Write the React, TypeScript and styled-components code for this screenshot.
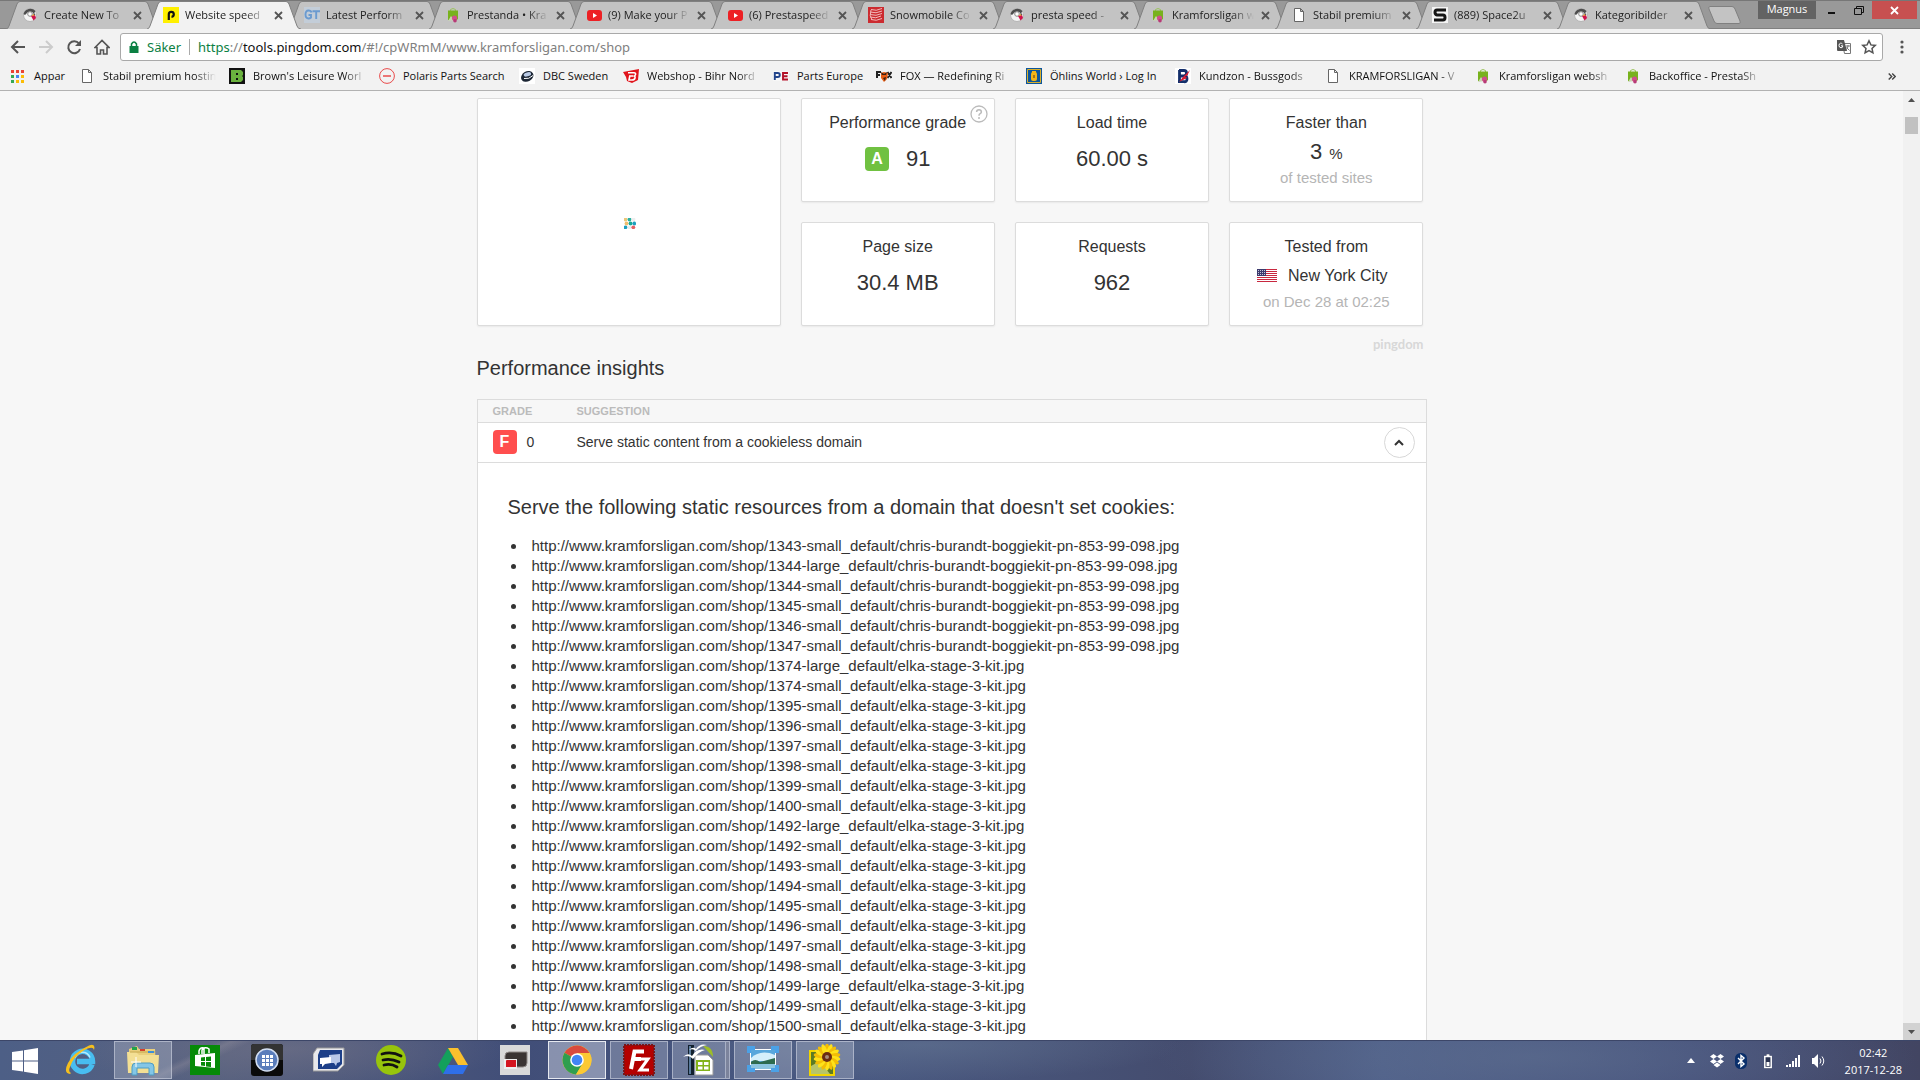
import React from 'react';
import styled, { createGlobalStyle } from 'styled-components';

const ui = '"Open Sans", "Noto Sans", sans-serif';
const body = '"Liberation Sans", Arial, sans-serif';

const Global = createGlobalStyle`
  *, *::before, *::after { box-sizing: border-box; }
  body { margin: 0; overflow: hidden; }
  button { font: inherit; color: inherit; padding: 0; margin: 0; border: 0; background: none; }
  h1, h2, h3, p, ul { margin: 0; padding: 0; font-weight: 400; }
  svg { display: block; flex: none; }
`;

const Screen = styled.div`
  height: 100vh;
  display: flex;
  flex-direction: column;
  font-family: ${ui};
  font-size: 11px;
  color: #111;
`;

/* ---------- browser chrome ---------- */

const TabStrip = styled.div`
  display: flex;
  height: 29px;
  padding: 0 3px 0 6px;
  background: #999;
  border-top: 1px solid #777;
  border-bottom: 1px solid #808080;
`;

const TabList = styled.div`
  display: flex;
`;

const Tab = styled.div<{ $active?: boolean }>`
  position: relative;
  z-index: ${p => (p.$active ? 1 : 0)};
  display: flex;
  align-items: center;
  width: 141px;
  height: 28px;
  padding-left: 16px;
`;

const TabShape = styled.svg`
  position: absolute;
  left: 0;
  top: 0;
`;

const TabLink = styled.a`
  position: relative;
  display: flex;
  align-items: center;
  gap: 6px;
  color: #222;
  text-decoration: none;
`;

const fade = `
  overflow: hidden;
  white-space: nowrap;
  mask-image: linear-gradient(to right, #000 calc(100% - 22px), transparent);
`;

const TabTitle = styled.span`
  width: 82px;
  line-height: 18px;
  ${fade}
`;

const TabClose = styled.button`
  position: relative;
  margin-left: 7px;
`;

const NewTab = styled.button`
  align-self: center;
  margin-left: 9px;
`;

const WindowControls = styled.div`
  display: flex;
  align-items: flex-start;
  margin-left: auto;
`;

const Profile = styled.button`
  width: 58px;
  height: 18px;
  padding-bottom: 3px;
  background: #636363;
  color: #fff;
  line-height: 15px;
`;

const WinButton = styled.button<{ $close?: boolean }>`
  display: flex;
  align-items: center;
  justify-content: center;
  width: ${p => (p.$close ? 45 : 26)}px;
  height: 18px;
  margin-left: ${p => (p.$close ? 0 : 2)}px;
  background: ${p => (p.$close ? '#c75050' : 'transparent')};
`;

const Toolbar = styled.div`
  display: flex;
  align-items: center;
  height: 33px;
  padding: 4px 8px 1px 4px;
  background: #f2f2f2;
`;

const NavButton = styled.button`
  display: flex;
  align-items: center;
  justify-content: center;
  width: 28px;
  height: 28px;
`;

const Omnibox = styled.div`
  display: flex;
  flex: 1;
  align-items: center;
  height: 28px;
  margin-left: 4px;
  padding: 0 1px 0 8px;
  border: 1px solid #a9a9a9;
  border-radius: 3px;
  background: #fff;
  font-family: "Noto Sans", sans-serif;
  font-size: 13px;
`;

const Secure = styled.span`
  margin-left: 8px;
  padding-right: 8px;
  border-right: 1px solid #aaa;
  line-height: 16px;
  color: #0b8043;
`;

const Url = styled.div`
  flex: 1;
  padding-left: 8px;
  color: #808080;
  outline: 0;
`;

const Scheme = styled.span` color: #0b8043; `;
const Host = styled.span` color: #111; `;

const OmniAction = styled.button`
  display: flex;
  align-items: center;
  justify-content: center;
  width: 25px;
  height: 24px;
`;

const MenuButton = styled(NavButton)`
  margin: 0 -4px 0 5px;
`;

const Bookmarks = styled.nav`
  display: flex;
  align-items: center;
  gap: 13px;
  height: 29px;
  padding: 0 24px 0 10px;
  background: #f2f2f2;
  border-bottom: 1px solid #b2b2b2;
`;

const Bookmark = styled.a`
  display: flex;
  align-items: center;
  gap: 8px;
  color: #111;
  text-decoration: none;
`;

const BookmarkTitle = styled.span<{ $width?: number }>`
  width: ${p => p.$width || 113}px;
  line-height: 18px;
  white-space: nowrap;
  ${p => (p.$width ? '' : fade)}
`;

const Overflow = styled.button`
  margin-left: auto;
`;

/* ---------- page ---------- */

const Viewport = styled.div`
  display: flex;
  flex: 1;
  min-height: 0;
`;

const Page = styled.main`
  flex: 1;
  overflow: hidden;
  background: #f7f7f7;
  font-family: ${body};
  color: #333;
`;

const Container = styled.div`
  max-width: 950px;
  margin: 0 auto;
  padding-top: 7px;
`;

const Summary = styled.section`
  display: grid;
  grid-template-columns: 304px repeat(3, 1fr);
  grid-auto-rows: 104px;
  gap: 20px;
  padding-right: 3px;
`;

const Card = styled.article`
  position: relative;
  display: flex;
  flex-direction: column;
  align-items: center;
  padding-top: 12px;
  border: 1px solid #dcdcdc;
  border-radius: 2px;
  background: #fff;
  box-shadow: 0 1px 2px rgba(0, 0, 0, 0.06);
`;

const Preview = styled(Card)`
  grid-row: span 2;
  justify-content: center;
  padding: 23px 0 0 3px;
`;

const CardLabel = styled.h3`
  font-size: 16px;
  line-height: 24px;
`;

const Value = styled.p<{ $gap?: number; $compact?: boolean; $small?: boolean }>`
  display: flex;
  align-items: center;
  gap: ${p => p.$gap || 0}px;
  margin-top: ${p => (p.$small ? 2 : p.$compact ? 3 : 10)}px;
  padding-right: ${p => (p.$small ? 8 : 0)}px;
  font-size: ${p => (p.$small ? 16 : 22)}px;
  line-height: ${p => (p.$small ? 29 : 28)}px;
`;

const Percent = styled.small`
  font-size: 15px;
  line-height: 24px;
  align-self: flex-end;
`;

const Note = styled.p`
  font-size: 15px;
  line-height: 24px;
  color: #b5b5b5;
`;

const Grade = styled.span<{ $color: string }>`
  display: inline-block;
  width: 24px;
  height: 24px;
  border-radius: 4px;
  background: ${p => p.$color};
  color: #fff;
  font-size: 16px;
  font-weight: 700;
  line-height: 23px;
  text-align: center;
`;

const Help = styled.button`
  position: absolute;
  top: 6px;
  right: 6px;
`;

const Brand = styled.p`
  margin-top: 8px;
  padding-right: 3px;
  font-family: Lato, sans-serif;
  font-size: 13px;
  font-weight: 700;
  line-height: 20px;
  text-align: right;
  color: #d8d8d8;
`;

const Title = styled.h2`
  margin-bottom: 16px;
  font-size: 20px;
  line-height: 29px;
`;

const Insights = styled.table`
  width: 100%;
  border: 1px solid #dcdcdc;
  border-spacing: 0;
  table-layout: fixed;
  background: #fff;
`;

const HeadCell = styled.th<{ $width?: number }>`
  width: ${p => (p.$width ? p.$width + 'px' : 'auto')};
  height: 23px;
  padding: 0 0 0 15px;
  border-bottom: 1px solid #dcdcdc;
  background: #f7f7f7;
  font-size: 11px;
  text-align: left;
  color: #bbb;
`;

const Cell = styled.td`
  height: 40px;
  padding: 0 11px 1px 15px;
  border-bottom: 1px solid #dcdcdc;
  font-size: 14px;
`;

const Score = styled.div`
  display: flex;
  align-items: center;
  gap: 10px;
`;

const Suggestion = styled.div`
  display: flex;
  align-items: center;
  justify-content: space-between;
`;

const Toggle = styled.button`
  display: flex;
  align-items: center;
  justify-content: center;
  width: 31px;
  height: 31px;
  border: 1px solid #d8d8d8;
  border-radius: 50%;
  background: #fff;
`;

const Detail = styled.td`
  padding: 30px 30px 60px;
`;

const DetailTitle = styled.h3`
  margin-bottom: 15px;
  font-size: 20px;
  line-height: 28px;
`;

const Resources = styled.ul`
  list-style: none;
  font-size: 15px;
  line-height: 20px;
`;

const Resource = styled.li`
  display: flex;
  align-items: center;
  gap: 16px;
  padding-left: 3px;
  &::before {
    content: '';
    width: 5px;
    height: 5px;
    border-radius: 50%;
    background: #333;
  }
`;

const Scrollbar = styled.div`
  display: flex;
  flex-direction: column;
  width: 17px;
  background: #f1f1f1;
`;

const ScrollArrow = styled.button<{ $shaded?: boolean }>`
  display: flex;
  align-items: center;
  justify-content: center;
  height: 17px;
  background: ${p => (p.$shaded ? '#d2d2d2' : 'transparent')};
`;

const Track = styled.div`
  flex: 1;
  padding: 9px 2px 0;
`;

const Thumb = styled.div`
  height: 17px;
  background: #c1c1c1;
`;

/* ---------- taskbar ---------- */

const Taskbar = styled.footer`
  display: flex;
  height: 40px;
  border-top: 1px solid #3c4668;
  color: #fff;
  background:
    linear-gradient(155deg, transparent 46%, rgba(150, 146, 160, 0.35) 50%, transparent 56%) 60px 0 / 260px 40px no-repeat,
    radial-gradient(ellipse 220px 40px at 15% 20%, rgba(125, 122, 140, 0.45), transparent),
    radial-gradient(ellipse 260px 36px at 48% 10%, rgba(104, 122, 150, 0.5), transparent),
    radial-gradient(ellipse 380px 60px at 80% 40%, rgba(95, 112, 144, 0.6), transparent),
    linear-gradient(to right, #4d5f86, #56607e 12%, #414e78 27%, #4a5a82 45%, #444c6e 62%, #4f608a 72%, #45507a 88%, #424562);
`;

const StartButton = styled.button`
  display: flex;
  align-items: center;
  justify-content: center;
  width: 50px;
`;

const Task = styled.button<{ $state?: 'open' | 'active' | 'stack' }>`
  display: flex;
  align-items: center;
  justify-content: center;
  width: 58px;
  height: 38px;
  margin: 0 2px;
  border: 1px solid ${p => (p.$state === 'active' ? '#e6e9f0' : p.$state ? 'rgba(205,210,225,.6)' : 'transparent')};
  background: ${p => (p.$state === 'active' ? 'rgba(205,212,228,.5)' : p.$state ? 'rgba(180,186,205,.38)' : 'none')};
  ${p => (p.$state === 'stack' ? 'padding-right: 5px; box-shadow: inset -4px 0 0 -1px rgba(80,88,116,.5), inset -5px 0 0 -1px rgba(205,210,225,.6);' : '')}
`;

const Tray = styled.div`
  display: flex;
  align-items: center;
  gap: 10px;
  margin-left: auto;
  padding-right: 18px;
`;

const Clock = styled.time`
  margin-left: 8px;
  line-height: 17px;
  text-align: center;
`;

/* ---------- icons ---------- */

type IconName =
  | 'puffin' | 'pingdom' | 'gt' | 'presta' | 'youtube' | 'snow' | 'page' | 'space'
  | 'apps' | 'brown' | 'polaris' | 'dbc' | 'bihr' | 'pe' | 'fox' | 'ohlins' | 'buss';

const glyph = { fontFamily: 'Liberation Sans', fontWeight: 700, textAnchor: 'middle' as const };

const drawings: Record<IconName, React.ReactNode> = {
  puffin: <>
    <circle cx="8" cy="8" r="6.500" fill="#f4f4f4" stroke="#b5b5b5" />
    <path d="M1.500 7A7 7 0 0 1 13.500 4L12 6.500Q9 3.500 6 5L3 8z" fill="#4d4d4d" />
    <circle cx="8" cy="7" r="2.300" fill="#fff" stroke="#888" />
    <path d="M9 9l4-1 1 3-2.500 2.500z" fill="#d0124d" /><path d="M11.500 5.500l2 2-2 1z" fill="#4d4d4d" />
    <path d="M9.500 9l2-2 1 1.500z" fill="#ef9a1e" />
  </>,
  pingdom: <>
    <path d="M0 0h16v16H0z" fill="#fff000" />
    <path d="M5.800 13V7.300a2.500 2.500 0 1 1 2.700 2.500" fill="none" stroke="#111" strokeWidth="2.200" />
  </>,
  gt: <>
    <path d="M0 0h16v16H0z" fill="#c3cdd8" />
    <path d="M7.500 5.500Q7 3.500 4.500 3.500 1.500 3.500 1.500 7.500T4.500 11.500Q6 11.500 7 10.500V8H4.500M8.500 4.300H16M12.200 4v8" fill="none" stroke="#6b9bd0" strokeWidth="1.900" />
  </>,
  presta: <>
    <path d="M5.500 4V2.500q2.500-2 5 0V4" fill="none" stroke="#9bc35c" />
    <path d="M3 3.500h10v8L12 13H3z" fill="#78b21d" />
    <path d="M3 14l3-5 3 4z" fill="#c9d6b4" />
    <circle cx="9.500" cy="11" r="2.600" fill="#d14f8c" /><circle cx="10" cy="13.800" r="1.800" fill="#b83a76" />
  </>,
  youtube: <>
    <rect x="1" y="3" width="15" height="11" rx="3" fill="#ed2024" />
    <path d="M7 6v5l4-2.500z" fill="#fff" />
  </>,
  snow: <>
    <path d="M0 0h16v16H0z" fill="#cc2b30" />
    <path d="M3 2.500q5 2 11-1M2 5q6 2 12-1M2 7.500q6 2 12-1M2 10q6 2 11-1M3 12.500q5 2 11-1M3 3Q1 9 4 13" stroke="#f2b9b9" fill="none" />
  </>,
  page: <path d="M3.500 1.500h6l3 3v10h-9zM9.500 1.500v3h3" fill="#fff" stroke="#666" />,
  space: <>
    <path d="M0 0h16v16H0z" fill="#f4f4f4" />
    <path d="M14 3H5Q3 3 3 5.300T5 8h6q2 0 2 2.500T11 13H2" fill="none" stroke="#151515" strokeWidth="3" />
  </>,
  apps: <>
    {[['#ea4335', '#ea4335', '#ea4335'], ['#34a853', '#4285f4', '#fbbc05'], ['#34a853', '#fbbc05', '#fbbc05']].map((row, y) =>
      row.map((c, x) => <rect key={`${x}${y}`} x={1 + x * 5} y={2 + y * 5} width="3" height="3" fill={c} />))}
  </>,
  brown: <>
    <path d="M0 0h16v16H0z" fill="#111" /><path d="M2 2h10l2 2v3l-1 1 1 1v3l-2 2H2z" fill="#6ab23e" />
    <path d="M7 5h2v2H7zM7 10h2v2H7z" fill="#111" />
  </>,
  polaris: <><circle cx="8" cy="8" r="7.400" fill="none" stroke="#e94b4b" /><path d="M4 8h8" stroke="#e94b4b" strokeWidth="1.500" /></>,
  dbc: <>
    <path d="M0 0h16v16H0z" fill="#fff" /><ellipse cx="8" cy="8.500" rx="6.500" ry="5" transform="rotate(-30 8 8)" fill="#1c2634" />
    <ellipse cx="8.500" cy="6.500" rx="3.800" ry="2" transform="rotate(-15 8 7)" fill="#b9c9e4" /><path d="M5 10.500q5 1 9-3" stroke="#fff" fill="none" />
  </>,
  bihr: <>
    <path d="M0 4l16-3-1 11-6 3-5-2-1-4z" fill="#e1141c" />
    <path d="M5 4.800h6q2 0 1.500 1.800T10.500 8q2 0 1.500 2t-3 2H6l.8-4M6 8h4" fill="none" stroke="#fff" strokeWidth="1.600" />
  </>,
  pe: <>
    <path d="M0 3h16v10H0z" fill="#f7f7f7" />
    <path d="M1.800 12V5h3q2 0 2 2t-2 2h-3" fill="none" stroke="#23458c" strokeWidth="1.900" />
    <path d="M15 5H10v6.500h5M10 8.200h4.500" fill="none" stroke="#b3122a" strokeWidth="1.900" />
  </>,
  fox: <>
    <path d="M1 10V4h4M1 7h3M11.500 4l4 6M15.500 4l-4 6" fill="none" stroke="#222" strokeWidth="2" />
    <path d="M5 5l3-1 4 1-1 6-3 3-3-4z" fill="#e85c12" /><path d="M5 4l3 2 3-2-1 3H6zM7 10l3-1-1 4z" fill="#3b2114" />
  </>,
  ohlins: <>
    <path d="M0 0h16v16H0z" fill="#0d559b" /><path d="M1.500 1.500h13v13h-13z" fill="none" stroke="#d9b02c" />
    <rect x="5" y="4" width="6" height="9" rx="2" fill="#f4b517" /><path d="M6 3h4v2H6z" fill="#f4b517" /><path d="M7 7h2v3H7z" fill="#ab7413" />
  </>,
  buss: <>
    <path d="M0 0h16v16H0z" fill="#fff" />
    <path d="M4 2.500h5q2.500 0 2.500 2.600T9 8H5M4.500 2v12M5 8h4q3 0 3 3t-3 2.700H3" fill="none" stroke="#142f6b" strokeWidth="2.800" />
    <path d="M15 2l-3 6-2 0 2 2-8 4 4-5z" fill="#d91c32" />
  </>,
};

const Favicon = ({ name }: { name: IconName }) => (
  <svg width="16" height="16" viewBox="0 0 16 16" aria-hidden="true">{drawings[name]}</svg>
);

const Cross = ({ color }: { color: string }) => (
  <svg width="9" height="9" viewBox="0 0 9 9"><path d="M1 1l7 7M8 1L1 8" stroke={color} strokeWidth="1.800" /></svg>
);

const Flag = () => (
  <svg width="20" height="13" viewBox="0 0 20 13" role="img" aria-label="USA">
    <path d="M0 0h20v13H0z" fill="#fff" />
    <path d="M0 .5h20M0 2.500h20M0 4.500h20M0 6.500h20M0 8.500h20M0 10.500h20M0 12.500h20" stroke="#c8283f" />
    <path d="M0 0h9v7H0z" fill="#3c3b6e" />
    <path d="M1 1.500h8M1 3.500h8M1 5.500h8" stroke="#c5c5d8" strokeDasharray="1 1" />
  </svg>
);

const Loader = () => (
  <svg width="12" height="11" viewBox="0 0 12 11">
    {[[1.5, 1.5, '#eac77a'], [5.5, 1.5, '#2ab0a0'], [9.5, 1.5, '#eee'], [2.5, 5.5, '#f0bd6e'], [6.5, 5.5, '#17a995'],
      [10.3, 5.5, '#1b9fc0'], [1.5, 9.3, '#1c9fc0'], [5.5, 9.3, '#e9eef0'], [9.3, 9.3, '#e55f62']].map(([x, y, c], i) =>
      <circle key={i} cx={x} cy={y} r="1.900" fill={c as string} />)}
  </svg>
);

const TaskIcon = ({ children }: { children: React.ReactNode }) => (
  <svg width="32" height="32" viewBox="0 0 32 32" aria-hidden="true">{children}</svg>
);

const tasks: { label: string; state?: 'open' | 'active' | 'stack'; icon: React.ReactNode }[] = [
  { label: 'Internet Explorer', icon: <>
    <path d="M27 20.500A10 10 0 1 1 27.500 17.500H12" fill="none" stroke="#48bdf0" strokeWidth="5.500" />
    <path d="M10 13.500a8 8 0 0 1 15 0" fill="none" stroke="#b4eafc" strokeWidth="1.500" />
    <path d="M5 30Q-2 29 3 19T24 1.500q7-2.500 5 4.500Q28 1 18 7T5 23q-2 5 1 6z" fill="#f5bf1e" />
  </> },
  { label: 'File Explorer', state: 'open', icon: <>
    <path d="M2 5l8-3 2 3h16l1 21H2z" fill="#e9cf7c" /><path d="M0 8h9l3 3h20l-1 18H1z" fill="#f3df94" />
    <path d="M3 8h25" stroke="#c6a84e" /><path d="M5 3h5v3H5z" fill="#23a34a" /><path d="M13 5h5v2h-5z" fill="#d5402b" /><path d="M21 7h6v2h-6z" fill="#3d8fd8" />
    <path d="M5 31V23q0-4 4-4h14q4 0 4 4v8h-5v-7H10v7z" fill="#84c6e6" stroke="#4d9cc4" />
    <path d="M9 13v10M4 18h10" stroke="#fff" />
  </> },
  { label: 'Store', icon: <>
    <path d="M1 1h30v30H1z" fill="#068a08" /><path d="M6 11l20-2v15l-20-2z" fill="#fff" />
    <path d="M10 10V7q1-4 5-3v6M13 10V6q3-4 7-1v4" fill="none" stroke="#fff" strokeWidth="1.500" />
    <path d="M12 13.500l4-.5v4h-4zM17 13l5-.5V17h-5zM12 18h4v4l-4-.5zM17 18h5v5l-5-.6z" fill="#068a08" />
  </> },
  { label: 'App launcher', icon: <>
    <rect width="32" height="32" rx="3" fill="#0a0a0a" /><path d="M0 16V3q0-3 3-3h26q3 0 3 3v13z" fill="#333" />
    <circle cx="16" cy="16" r="11" fill="#5a7dbb" stroke="#d4dff2" strokeWidth="1.500" />
    <path d="M11 11h3v3h-3zM15 11h3v3h-3zM19 11h3v3h-3zM11 15h3v3h-3zM15 15h3v3h-3zM19 15h3v3h-3zM11 19h3v3h-3zM15 19h3v3h-3zM19 19h3v3h-3z" fill="#fff" />
  </> },
  { label: 'Messages', icon: <>
    <path d="M4 4h27v17l-6 6H0V10z" fill="#e8e8ec" stroke="#999" /><path d="M7 6h22v14l-5 5H5V11z" fill="#1d3f88" />
    <path d="M16 11l11-1v8l-3 1-1 3-2-3h-5z" fill="#b9c8e8" /><path d="M7 14l11-1v6l-6 1-3 3v-3H7z" fill="#fff" />
  </> },
  { label: 'Spotify', icon: <>
    <circle cx="16" cy="16" r="15" fill="#97c40c" />
    <path d="M7 10q10-3 19 2M8 16q8-2 16 2M9 21q7-2 13 2" stroke="#111" strokeWidth="2.800" strokeLinecap="round" fill="none" />
  </> },
  { label: 'Google Drive', icon: <>
    <path d="M11 4l5 9L6 30 1 21z" fill="#13a05c" /><path d="M11 4h10l10 17H21z" fill="#fbc02d" /><path d="M11 21h20l-5 9H6z" fill="#2f6fe8" />
  </> },
  { label: 'Screen recorder', icon: <>
    <path d="M1 1h30v30H1z" fill="#d9d9d9" /><path d="M10 8h18v11q0 4-4 4H6V12q0-4 4-4z" fill="#3a3433" stroke="#8e8886" />
    <path d="M5 15h13v10H5z" fill="#eee" /><path d="M7 17q0-1 1-1h9v7H7z" fill="#d4151f" />
  </> },
  { label: 'Chrome', state: 'active', icon: <>
    <circle cx="16" cy="16" r="14.500" fill="#fcc934" /><path d="M16 16L3.500 8.700A14.500 14.500 0 0 1 28.600 9H16z" fill="#d94a3d" />
    <path d="M3.500 8.700A14.500 14.500 0 0 0 15 30.500L22 19l-6-3z" fill="#2f9e4f" />
    <path d="M16 9h12.600A14.500 14.500 0 0 1 15 30.500L22 19z" fill="#fcc934" />
    <circle cx="16" cy="16" r="6.800" fill="#fff" /><circle cx="16" cy="16" r="5.300" fill="#4285f4" />
  </> },
  { label: 'FileZilla', state: 'open', icon: <>
    <path d="M1 1h30v30H1z" fill="#b40000" stroke="#7a1518" strokeWidth="2" strokeDasharray="2 1" />
    <path d="M8 25L11.500 7.500H21M10 15h8" fill="none" stroke="#fff" strokeWidth="4" /><path d="M16 15h9l-8 11h9" fill="none" stroke="#fff" strokeWidth="3" />
  </> },
  { label: 'OpenOffice', state: 'stack', icon: <>
    <path d="M5 1h6v30H5z" fill="#12202e" /><path d="M6 2h2v28H6z" fill="#597a9a" /><path d="M20 2q10 0 10 11z" fill="#9dbe27" />
    <path d="M12 11h13l5 5v15H12z" fill="#fff" stroke="#999" /><path d="M13 16h14v11H13z" fill="#83b31a" />
    <path d="M15 18h4.500v3H15zM21 18h4.500v3H21zM15 22.500h4.500v3H15zM21 22.500h4.500v3H21z" fill="#fff" />
    <path d="M0 13q5-5 9-1 5-8 13-6-7 2-12 9-4-5-10-2zM6 6q4-4 7-1 4-6 11-4-7 1-11 6-3-3-7-1z" fill="#fff" />
  </> },
  { label: 'Photo viewer', state: 'open', icon: <>
    <path d="M3 5h26v21H3z" fill="#fff" /><path d="M4 6h24v19H4z" fill="#58a7dc" /><path d="M4 14q10-9 24-3v6H4z" fill="#d4effb" />
    <path d="M4 18q4-4 9 0l15-4v7H4z" fill="#2d6b4e" /><path d="M4 20h24v5H4z" fill="#8cc5df" />
    <path d="M2 9V4h6M24 4h6v5M30 21v5h-6M8 26H2v-5" fill="none" stroke="#4ba1e6" strokeWidth="4" />
  </> },
  { label: 'Sunflower', state: 'open', icon: <>
    <path d="M0 6h26v26H0z" fill="#f1d500" /><path d="M2 8h22v22H2z" fill="#5c7b24" /><path d="M2 22l9-5 10 13H2z" fill="#b7c46a" />
    {Array.from({ length: 18 }, (_, i) => <ellipse key={i} cx="18" cy="5.500" rx="2.400" ry="6" fill={i % 2 ? '#ffe21a' : '#f3bd06'} transform={`rotate(${i * 20} 18 13)`} />)}
    <circle cx="18" cy="13" r="5" fill="#6b2c12" /><circle cx="18" cy="13" r="2" fill="#a88c7a" />
  </> },
];

/* ---------- data ---------- */

const tabs: { icon: IconName; title: string; active?: boolean }[] = [
  { icon: 'puffin', title: 'Create New To' },
  { icon: 'pingdom', title: 'Website speed', active: true },
  { icon: 'gt', title: 'Latest Perform' },
  { icon: 'presta', title: 'Prestanda • Kra' },
  { icon: 'youtube', title: '(9) Make your P' },
  { icon: 'youtube', title: '(6) Prestaspeed' },
  { icon: 'snow', title: 'Snowmobile Co' },
  { icon: 'puffin', title: 'presta speed -' },
  { icon: 'presta', title: 'Kramforsligan w' },
  { icon: 'page', title: 'Stabil premium' },
  { icon: 'space', title: '(889) Space2u' },
  { icon: 'puffin', title: 'Kategoribilder' },
];

const bookmarks: { icon: IconName; title: string; width?: number }[] = [
  { icon: 'apps', title: 'Appar', width: 32 },
  { icon: 'page', title: 'Stabil premium hostin' },
  { icon: 'brown', title: "Brown's Leisure Worl" },
  { icon: 'polaris', title: 'Polaris Parts Search', width: 103 },
  { icon: 'dbc', title: 'DBC Sweden', width: 67 },
  { icon: 'bihr', title: 'Webshop - Bihr Nord' },
  { icon: 'pe', title: 'Parts Europe', width: 66 },
  { icon: 'fox', title: 'FOX — Redefining Ri' },
  { icon: 'ohlins', title: 'Öhlins World › Log In', width: 112 },
  { icon: 'buss', title: 'Kundzon - Bussgods' },
  { icon: 'page', title: 'KRAMFORSLIGAN - V' },
  { icon: 'presta', title: 'Kramforsligan websh' },
  { icon: 'presta', title: 'Backoffice - PrestaSh' },
];

const boggie = 'chris-burandt-boggiekit-pn-853-99-098';
const elka = 'elka-stage-3-kit';
const resources: [string, string][] = [
  ...['1343-small', '1344-large', '1344-small', '1345-small', '1346-small', '1347-small'].map((id): [string, string] => [id, boggie]),
  ...['1374-large', '1374-small', '1395-small', '1396-small', '1397-small', '1398-small', '1399-small', '1400-small',
    '1492-large', '1492-small', '1493-small', '1494-small', '1495-small', '1496-small', '1497-small', '1498-small',
    '1499-large', '1499-small', '1500-small'].map((id): [string, string] => [id, elka]),
];

const stroke = { fill: 'none', stroke: '#555', strokeWidth: 2 };

export default function App() {
  return (
    <Screen>
      <Global />
      <TabStrip>
        <TabList>
          {tabs.map(t => (
            <Tab key={t.title} $active={t.active}>
              <TabShape width="155" height="28" viewBox="0 0 155 28">
                <path d="M0 28Q2 28 3 25L11 3Q12 .5 14 .5H139Q141 .5 142 3L150 25Q151 28 154 28"
                  fill={t.active ? '#f2f2f2' : '#c3c3c3'} stroke="#808080" />
              </TabShape>
              <TabLink href="#"><Favicon name={t.icon} /><TabTitle>{t.title}</TabTitle></TabLink>
              <TabClose aria-label="Close tab"><Cross color="#555" /></TabClose>
            </Tab>
          ))}
        </TabList>
        <NewTab aria-label="New tab">
          <svg width="36" height="18" viewBox="0 0 36 18"><path d="M3 .5H25Q27 .5 28 3L33 15Q34 17.500 32 17.500H10Q8 17.500 7 15L2 3Q1 .5 3 .5z" fill="#c3c3c3" stroke="#808080" /></svg>
        </NewTab>
        <WindowControls>
          <Profile>Magnus</Profile>
          <WinButton aria-label="Minimize"><svg width="9" height="9"><path d="M1 7h7" stroke="#111" strokeWidth="2" /></svg></WinButton>
          <WinButton aria-label="Restore"><svg width="10" height="9" viewBox="0 0 10 9"><path d="M.5 2.500h7v6h-7zM2.500 2V.5h7v6H8" fill="none" stroke="#111" /></svg></WinButton>
          <WinButton $close aria-label="Close"><Cross color="#fff" /></WinButton>
        </WindowControls>
      </TabStrip>

      <Toolbar>
        <NavButton aria-label="Back"><svg width="16" height="16" viewBox="0 0 16 16"><path d="M15 8H2M8 2L2 8l6 6" {...stroke} /></svg></NavButton>
        <NavButton aria-label="Forward"><svg width="16" height="16" viewBox="0 0 16 16"><path d="M1 8h13M8 2l6 6-6 6" {...stroke} stroke="#ccc" /></svg></NavButton>
        <NavButton aria-label="Reload"><svg width="16" height="16" viewBox="0 0 16 16"><path d="M13 4.500A6 6 0 1 0 14 10" {...stroke} /><path d="M15 1v6H9z" fill="#555" /></svg></NavButton>
        <NavButton aria-label="Home"><svg width="16" height="16" viewBox="0 0 16 16"><path d="M1 8.500L8 1.500l7 7h-2V15H9.500v-4h-3v4H3V8.500z" fill="none" stroke="#555" strokeWidth="1.600" /></svg></NavButton>
        <Omnibox>
          <svg width="10" height="12" viewBox="0 0 10 12"><path d="M.5 5h9v7h-9z" fill="#0b8043" /><path d="M2.500 5V3q2.500-4 5 0v2" fill="none" stroke="#0b8043" strokeWidth="1.500" /></svg>
          <Secure>Säker</Secure>
          <Url role="textbox" aria-label="Address" tabIndex={0}><Scheme>https</Scheme>://<Host>tools.pingdom.com</Host>/#!/cpWRmM/www.kramforsligan.com/shop</Url>
          <OmniAction aria-label="Translate">
            <svg width="16" height="16" viewBox="0 0 16 16">
              <path d="M6.500 4.500h8v10h-6z" fill="#fff" stroke="#777" /><path d="M1 1h7l3 11H2q-1 0-1-1z" fill="#555" />
              <path d="M6.500 5Q5.500 4 4.500 4.200 3 4.500 3 6.500T5 8.800Q6.800 8.800 6.800 6.800H5" fill="none" stroke="#fff" /><path d="M9.500 7h4.500M12 6v1q0 2-2 4M10.500 8.500l3 3" stroke="#777" fill="none" />
            </svg>
          </OmniAction>
          <OmniAction aria-label="Bookmark this page">
            <svg width="16" height="16" viewBox="0 0 16 16"><path d="M8 1.800l1.900 4.100 4.400.5-3.300 3 .9 4.400L8 11.600l-3.900 2.200.9-4.400-3.300-3 4.400-.5z" fill="none" stroke="#555" strokeWidth="1.500" /></svg>
          </OmniAction>
        </Omnibox>
        <MenuButton aria-label="Menu"><svg width="4" height="14" viewBox="0 0 4 14"><g fill="#555"><circle cx="2" cy="2" r="1.600" /><circle cx="2" cy="7" r="1.600" /><circle cx="2" cy="12" r="1.600" /></g></svg></MenuButton>
      </Toolbar>

      <Bookmarks>
        {bookmarks.map(b => (
          <Bookmark href="#" key={b.title}><Favicon name={b.icon} /><BookmarkTitle $width={b.width}>{b.title}</BookmarkTitle></Bookmark>
        ))}
        <Overflow aria-label="More bookmarks"><svg width="8" height="7" viewBox="0 0 8 7"><path d="M.7.500l3 3-3 3M4.200.500l3 3-3 3" fill="none" stroke="#444" strokeWidth="1.400" /></svg></Overflow>
      </Bookmarks>

      <Viewport>
        <Page>
          <Container>
            <Summary>
              <Preview><Loader /></Preview>
              <Card>
                <CardLabel>Performance grade</CardLabel>
                <Value $gap={17}><Grade $color="#70c141">A</Grade>91</Value>
                <Help aria-label="Help"><svg width="18" height="18" viewBox="0 0 18 18"><circle cx="9" cy="9" r="8" fill="none" stroke="#bbb" strokeWidth="1.300" /><path d="M6.600 7q0-2.300 2.400-2.300T11.400 7q0 1-1.200 1.700Q9 9.400 9 10.700" fill="none" stroke="#bbb" strokeWidth="1.500" /><circle cx="9" cy="12.900" r="1" fill="#bbb" /></svg></Help>
              </Card>
              <Card><CardLabel>Load time</CardLabel><Value>60.00 s</Value></Card>
              <Card>
                <CardLabel>Faster than</CardLabel>
                <Value $compact $gap={7}>3<Percent>%</Percent></Value>
                <Note>of tested sites</Note>
              </Card>
              <Card><CardLabel>Page size</CardLabel><Value>30.4 MB</Value></Card>
              <Card><CardLabel>Requests</CardLabel><Value>962</Value></Card>
              <Card>
                <CardLabel>Tested from</CardLabel>
                <Value $small $gap={11}><Flag />New York City</Value>
                <Note>on Dec 28 at 02:25</Note>
              </Card>
            </Summary>
            <Brand>pingdom</Brand>
            <Title>Performance insights</Title>
            <Insights>
              <thead><tr><HeadCell $width={84}>GRADE</HeadCell><HeadCell>SUGGESTION</HeadCell></tr></thead>
              <tbody>
                <tr>
                  <Cell><Score><Grade $color="#ff4e4e">F</Grade>0</Score></Cell>
                  <Cell>
                    <Suggestion>
                      Serve static content from a cookieless domain
                      <Toggle aria-label="Collapse" aria-expanded="true"><svg width="10" height="7" viewBox="0 0 10 7"><path d="M1 6l4-4 4 4" fill="none" stroke="#333" strokeWidth="2" /></svg></Toggle>
                    </Suggestion>
                  </Cell>
                </tr>
                <tr>
                  <Detail colSpan={2}>
                    <DetailTitle>Serve the following static resources from a domain that doesn't set cookies:</DetailTitle>
                    <Resources>
                      {resources.map(([id, name]) => <Resource key={id}>{`http://www.kramforsligan.com/shop/${id}_default/${name}.jpg`}</Resource>)}
                    </Resources>
                  </Detail>
                </tr>
              </tbody>
            </Insights>
          </Container>
        </Page>
        <Scrollbar>
          <ScrollArrow aria-label="Scroll up"><svg width="7" height="4"><path d="M0 4l3.500-4L7 4z" fill="#505050" /></svg></ScrollArrow>
          <Track><Thumb /></Track>
          <ScrollArrow $shaded aria-label="Scroll down"><svg width="7" height="4"><path d="M0 0l3.500 4L7 0z" fill="#505050" /></svg></ScrollArrow>
        </Scrollbar>
      </Viewport>

      <Taskbar>
        <StartButton aria-label="Start">
          <svg width="26" height="26" viewBox="0 0 26 26"><path d="M0 4l11-1.600V12.500H0zM12 2.200L26 0v12.500H12zM0 13.500h11v10L0 22zM12 13.500h14V26l-14-2.200z" fill="#fff" /></svg>
        </StartButton>
        {tasks.map(t => <Task key={t.label} $state={t.state} aria-label={t.label}><TaskIcon>{t.icon}</TaskIcon></Task>)}
        <Tray>
          <svg width="12" height="5"><path d="M0 5l4-5 4 5z" fill="#fff" /></svg>
          <svg width="16" height="14" viewBox="0 0 16 14"><path d="M4.500 0L8 2.500 4.500 5 1 2.500zM11.500 0L15 2.500 11.500 5 8 2.500zM4.500 5L8 7.500 4.500 10 1 7.500zM11.500 5L15 7.500 11.500 10 8 7.500zM8 8.500l3.500 2.500L8 13.500 4.500 11z" fill="#fff" /></svg>
          <svg width="12" height="16" viewBox="0 0 12 16"><rect width="12" height="16" rx="5.500" fill="#0a2f6b" /><path d="M3 5l6 6-3 2.500v-11L9 5l-6 6" fill="none" stroke="#fff" strokeWidth="1.400" /></svg>
          <svg width="18" height="16" viewBox="2 0 18 16"><path d="M9 2.500h2V1h4v1.500h2v13H9z" fill="#2a3350" /><path d="M9.800 3.500h6.400v11H9.800zM11.500 2h3" fill="none" stroke="#fff" strokeWidth="1.500" /><path d="M11.500 9h3v4h-3z" fill="#fff" /></svg>
          <svg width="16" height="12" viewBox="0 0 16 12"><path d="M1 12v-2h2v2zM4 12V9h2v3zM7 12V6h2v6zM10 12V3h2v9zM13 12V0h2v12z" fill="#fff" /></svg>
          <svg width="16" height="14" viewBox="0 0 16 14"><path d="M1 4h2l4-4v14l-4-4H1z" fill="#fff" /><path d="M9 4.500q2 2.500 0 5M11 2.500q3.500 4.500 0 9" fill="none" stroke="#fff" /></svg>
          <Clock>02:42<br />2017-12-28</Clock>
        </Tray>
      </Taskbar>
    </Screen>
  );
}
